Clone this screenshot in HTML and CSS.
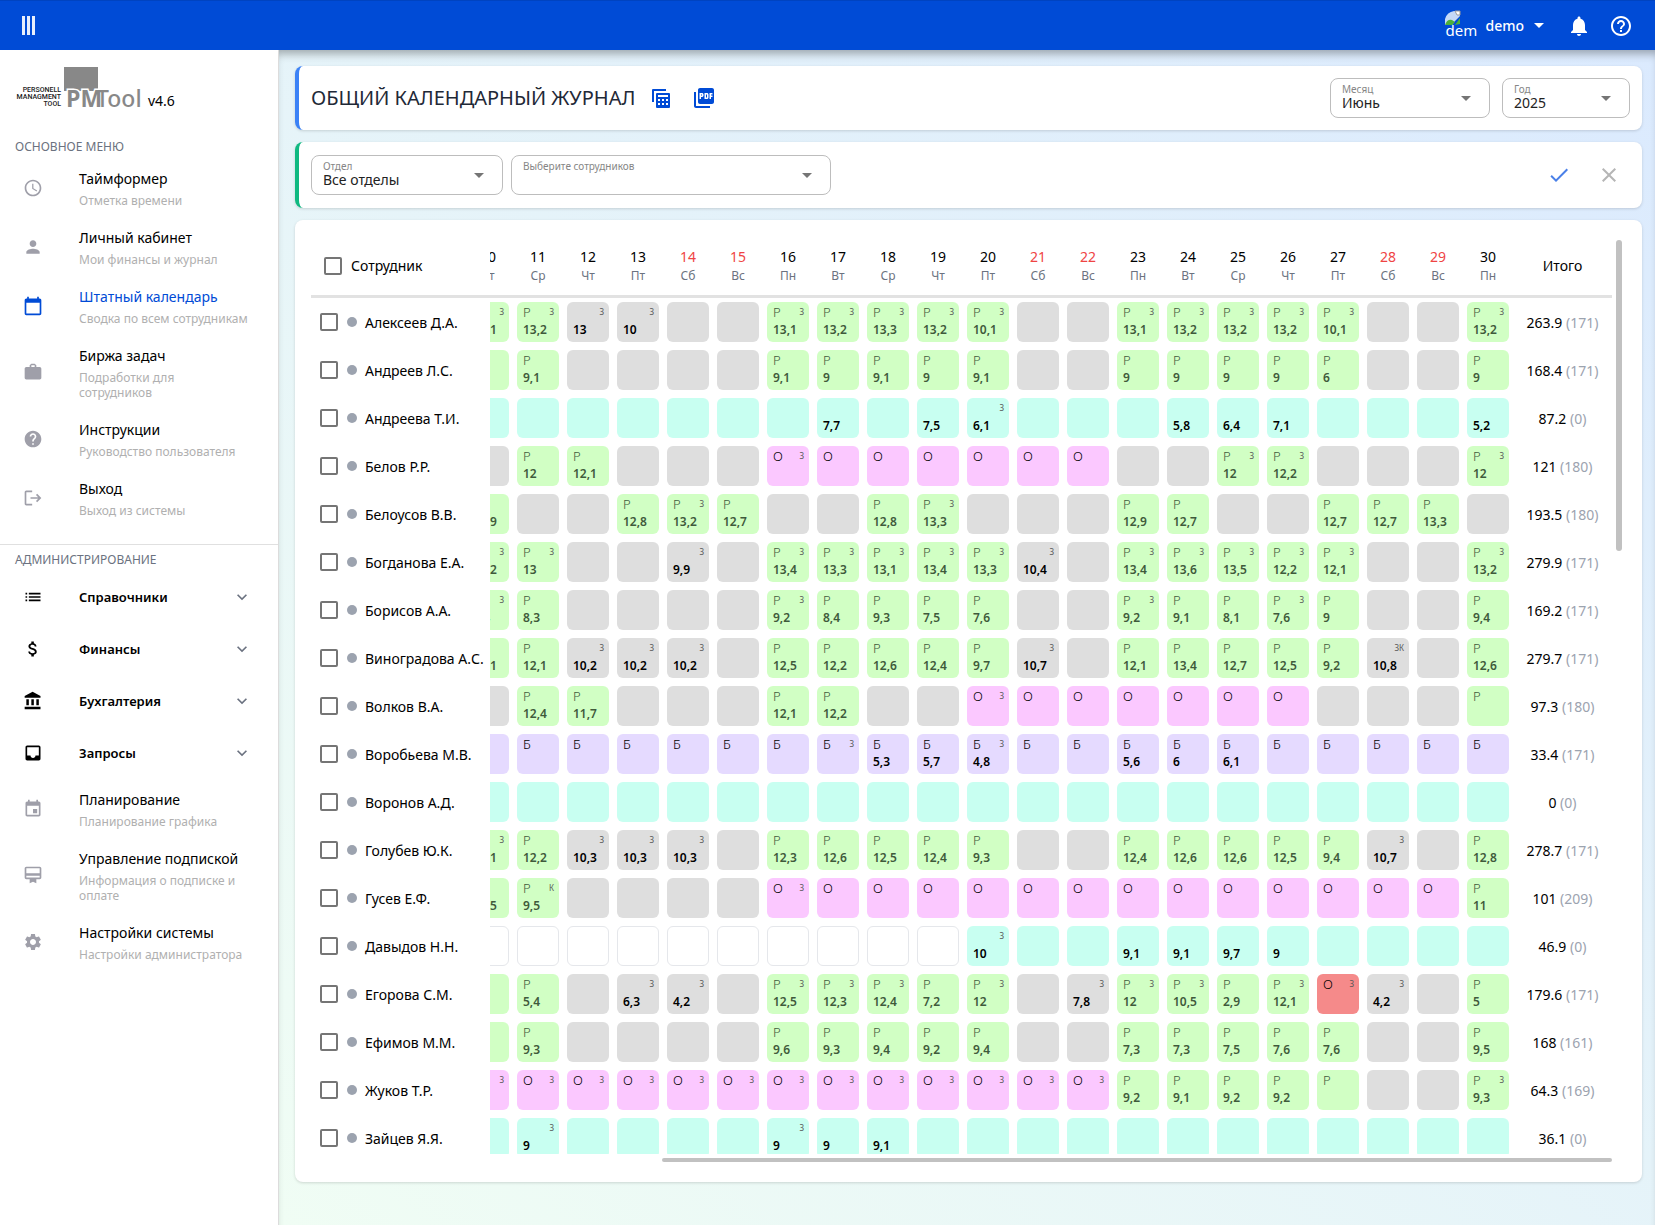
FILE: index.html
```
<!DOCTYPE html>
<html lang="ru">
<head>
  <meta charset="utf-8">
  <title>Общий календарный журнал</title>
  <link rel="stylesheet" href="styles.css">
</head>
<body>
  <header class="topbar">
    <button class="icon-btn menu-btn" aria-label="Меню">
      <span></span><span></span><span></span>
    </button>
    <div class="topbar-right">
      <button class="user">
        <span class="avatar">
          <svg width="16" height="16" viewBox="0 0 16 16">
            <path d="M0 15V9Q2 2 9 1l6 0v5l-5 5-3 4z" fill="#c5d9f7"/>
            <path d="M10 1h5v4h-3z" fill="#fff" stroke="#9a9a9a" stroke-width="1"/>
            <path d="M0 15q2-6 7-5l3 2-3 3z" fill="#4caf3a"/>
            <path d="M15 8v6l-5 1z" fill="#4caf3a"/>
          </svg>
          <span>dem</span>
        </span>
        <span class="user-name">demo</span>
        <span class="caret"></span>
      </button>
      <button class="icon-btn" aria-label="Уведомления">
        <svg width="24" height="24" viewBox="0 0 24 24"><path d="M12 22c1.1 0 2-.9 2-2h-4c0 1.1.9 2 2 2zm6-6v-5c0-3.07-1.63-5.64-4.5-6.32V4c0-.83-.67-1.5-1.5-1.5s-1.5.67-1.5 1.5v.68C7.64 5.36 6 7.92 6 11v5l-2 2v1h16v-1l-2-2z"/></svg>
      </button>
      <button class="icon-btn" aria-label="Помощь">
        <svg width="24" height="24" viewBox="0 0 24 24"><path d="M11 18h2v-2h-2v2zm1-16C6.48 2 2 6.48 2 12s4.48 10 10 10 10-4.48 10-10S17.52 2 12 2zm0 18c-4.41 0-8-3.59-8-8s3.59-8 8-8 8 3.59 8 8-3.59 8-8 8zm0-14c-2.21 0-4 1.79-4 4h2c0-1.1.9-2 2-2s2 .9 2 2c0 2-3 1.75-3 5h2c0-2.25 3-2.5 3-5 0-2.21-1.79-4-4-4z"/></svg>
      </button>
    </div>
  </header>

  <div class="layout">
    <aside class="sidebar">
      <div class="logo">
        <svg width="126" height="42" viewBox="0 0 126 42">
          <g class="logo-small" text-anchor="end">
            <text x="46" y="25">PERSONELL</text>
            <text x="46" y="32">MANAGMENT</text>
            <text x="46" y="39">TOOL</text>
          </g>
          <rect x="49" y="0" width="34" height="24" fill="#888"/>
          <text class="logo-pm" x="51" y="40">PM</text>
          <text class="logo-tool" x="81" y="40">Tool</text>
        </svg>
        <span class="version">v4.6</span>
      </div>

      <h2 class="menu-title">ОСНОВНОЕ МЕНЮ</h2>
      <nav class="menu">
        <a class="menu-item" href="#">
          <svg viewBox="0 0 24 24"><path d="M11.99 2C6.47 2 2 6.48 2 12s4.47 10 9.99 10C17.52 22 22 17.52 22 12S17.52 2 11.99 2zM12 20c-4.42 0-8-3.58-8-8s3.58-8 8-8 8 3.58 8 8-3.58 8-8 8zm.5-13H11v6l5.25 3.15.75-1.23-4.5-2.67z"/></svg>
          <span class="menu-text"><b>Таймформер</b><small>Отметка времени</small></span>
        </a>
        <a class="menu-item" href="#">
          <svg viewBox="0 0 24 24"><path d="M12 12c2.21 0 4-1.79 4-4s-1.79-4-4-4-4 1.79-4 4 1.79 4 4 4zm0 2c-2.67 0-8 1.34-8 4v2h16v-2c0-2.66-5.33-4-8-4z"/></svg>
          <span class="menu-text"><b>Личный кабинет</b><small>Мои финансы и журнал</small></span>
        </a>
        <a class="menu-item active" href="#">
          <svg viewBox="0 0 24 24"><path d="M20 3h-1V1h-2v2H7V1H5v2H4c-1.1 0-2 .9-2 2v16c0 1.1.9 2 2 2h16c1.1 0 2-.9 2-2V5c0-1.1-.9-2-2-2zm0 18H4V8h16v13z"/></svg>
          <span class="menu-text"><b>Штатный календарь</b><small>Сводка по всем сотрудникам</small></span>
        </a>
        <a class="menu-item" href="#">
          <svg viewBox="0 0 24 24"><path d="M20 6h-4V4l-2-2h-4L8 4v2H4c-1.1 0-2 .9-2 2v11c0 1.1.9 2 2 2h16c1.1 0 2-.9 2-2V8c0-1.1-.9-2-2-2zm-6 0h-4V4h4v2z"/></svg>
          <span class="menu-text"><b>Биржа задач</b><small>Подработки для сотрудников</small></span>
        </a>
        <a class="menu-item" href="#">
          <svg viewBox="0 0 24 24"><path d="M12 2C6.48 2 2 6.48 2 12s4.48 10 10 10 10-4.48 10-10S17.52 2 12 2zm1 17h-2v-2h2v2zm2.07-7.75l-.9.92C13.45 12.9 13 13.5 13 15h-2v-.5c0-1.1.45-2.1 1.17-2.83l1.24-1.26c.37-.36.59-.86.59-1.41 0-1.1-.9-2-2-2s-2 .9-2 2H8c0-2.21 1.79-4 4-4s4 1.79 4 4c0 .88-.36 1.68-.93 2.25z"/></svg>
          <span class="menu-text"><b>Инструкции</b><small>Руководство пользователя</small></span>
        </a>
        <a class="menu-item" href="#">
          <svg viewBox="0 0 24 24"><path d="M11 3H4c-1.100 0-2 .9-2 2v14c0 1.100.9 2 2 2h7v-2H4V5h7zM17 7l-1.410 1.410L18.170 11H9v2h9.170l-2.580 2.590L17 17l5-5z"/></svg>
          <span class="menu-text"><b>Выход</b><small>Выход из системы</small></span>
        </a>
      </nav>

      <h2 class="menu-title menu-title-line">АДМИНИСТРИРОВАНИЕ</h2>
      <nav class="menu">
        <button class="menu-group">
          <svg viewBox="0 0 24 24"><path d="M3 13h2v-2H3v2zm0 4h2v-2H3v2zm0-8h2V7H3v2zm4 4h14v-2H7v2zm0 4h14v-2H7v2zM7 7v2h14V7H7z"/></svg>
          <span>Справочники</span>
          <svg class="chevron" viewBox="0 0 24 24"><path d="M7.410 8.590L12 13.170l4.590-4.580L18 10l-6 6-6-6z"/></svg>
        </button>
        <button class="menu-group">
          <svg viewBox="0 0 24 24"><path d="M11.8 10.900c-2.270-.59-3-1.200-3-2.150 0-1.090 1.010-1.850 2.700-1.850 1.780 0 2.440.85 2.500 2.100h2.210c-.07-1.720-1.120-3.300-3.210-3.810V3h-3v2.160c-1.940.42-3.500 1.680-3.500 3.610 0 2.310 1.910 3.460 4.700 4.130 2.500.6 3 1.480 3 2.410 0 .69-.49 1.790-2.700 1.790-2.060 0-2.870-.92-2.980-2.100h-2.200c.12 2.190 1.760 3.420 3.680 3.830V21h3v-2.150c1.950-.37 3.500-1.500 3.500-3.550 0-2.840-2.430-3.810-4.700-4.400z"/></svg>
          <span>Финансы</span>
          <svg class="chevron" viewBox="0 0 24 24"><path d="M7.410 8.590L12 13.170l4.590-4.580L18 10l-6 6-6-6z"/></svg>
        </button>
        <button class="menu-group">
          <svg viewBox="0 0 24 24"><path d="M4 10v7h3v-7H4zm6 0v7h3v-7h-3zM2 22h19v-3H2v3zm14-12v7h3v-7h-3zm-4.500-9L2 6v2h19V6l-9.500-5z"/></svg>
          <span>Бухгалтерия</span>
          <svg class="chevron" viewBox="0 0 24 24"><path d="M7.410 8.590L12 13.170l4.590-4.580L18 10l-6 6-6-6z"/></svg>
        </button>
        <button class="menu-group">
          <svg viewBox="0 0 24 24"><path d="M19 3H4.990c-1.110 0-1.980.89-1.980 2L3 19c0 1.100.88 2 1.990 2H19c1.100 0 2-.9 2-2V5c0-1.110-.9-2-2-2zm0 12h-4c0 1.660-1.350 3-3 3s-3-1.340-3-3H4.990V5H19v10z"/></svg>
          <span>Запросы</span>
          <svg class="chevron" viewBox="0 0 24 24"><path d="M7.410 8.590L12 13.170l4.590-4.580L18 10l-6 6-6-6z"/></svg>
        </button>
        <a class="menu-item" href="#">
          <svg viewBox="0 0 24 24"><path d="M17 12h-5v5h5v-5zM16 1v2H8V1H6v2H5c-1.110 0-1.990.9-1.990 2L3 19c0 1.100.89 2 2 2h14c1.100 0 2-.9 2-2V5c0-1.100-.9-2-2-2h-1V1h-2zm3 18H5V8h14v11z"/></svg>
          <span class="menu-text"><b>Планирование</b><small>Планирование графика</small></span>
        </a>
        <a class="menu-item" href="#">
          <svg viewBox="0 0 24 24"><path d="M20 2H4c-1.110 0-2 .89-2 2v11c0 1.110.89 2 2 2h4v5l4-2 4 2v-5h4c1.110 0 2-.89 2-2V4c0-1.110-.89-2-2-2zm0 13H4v-2h16v2zm0-5H4V4h16v6z"/></svg>
          <span class="menu-text"><b>Управление подпиской</b><small>Информация о подписке и оплате</small></span>
        </a>
        <a class="menu-item" href="#">
          <svg viewBox="0 0 24 24"><path d="M19.140 12.940c.04-.3.06-.61.06-.94 0-.32-.02-.64-.07-.94l2.030-1.580c.18-.14.23-.41.12-.61l-1.920-3.320c-.12-.22-.37-.29-.59-.22l-2.390.96c-.5-.38-1.030-.7-1.620-.94l-.36-2.540c-.04-.24-.24-.41-.48-.41h-3.840c-.24 0-.43.17-.47.41l-.36 2.540c-.59.24-1.130.57-1.620.94l-2.390-.96c-.22-.08-.47 0-.59.22L2.740 8.870c-.12.21-.08.47.12.61l2.030 1.580c-.05.3-.09.63-.09.94s.02.64.07.94l-2.030 1.580c-.18.14-.23.41-.12.61l1.920 3.320c.12.22.37.29.59.22l2.390-.96c.5.38 1.030.7 1.620.94l.36 2.540c.05.24.24.41.48.41h3.840c.24 0 .44-.17.47-.41l.36-2.540c.59-.24 1.130-.56 1.620-.94l2.390.96c.22.08.47 0 .59-.22l1.920-3.320c.12-.22.07-.47-.12-.61l-2.010-1.580zM12 15.600c-1.980 0-3.600-1.620-3.600-3.600s1.620-3.600 3.600-3.600 3.600 1.620 3.600 3.600-1.620 3.600-3.600 3.600z"/></svg>
          <span class="menu-text"><b>Настройки системы</b><small>Настройки администратора</small></span>
        </a>
      </nav>
    </aside>

    <main class="content">
      <section class="card card-title">
        <h1>ОБЩИЙ КАЛЕНДАРНЫЙ ЖУРНАЛ</h1>
        <button class="icon-btn export-btn" aria-label="Экспорт в таблицу">
          <svg width="22" height="22" viewBox="0 0 22 22">
            <path d="M2 15V3q0-1 1-1h13v2H4v11z"/>
            <path fill-rule="evenodd" d="M7 6h12q1 0 1 1v13q0 1-1 1H7q-1 0-1-1V7q0-1 1-1zm1 2v2h10V8zm0 4v2h2v-2zm4 0v2h2v-2zm4 0v2h2v-2zm-8 4v2h2v-2zm4 0v2h2v-2zm4 0v2h2v-2z"/>
          </svg>
        </button>
        <button class="icon-btn export-btn" aria-label="Экспорт в PDF">
          <svg width="24" height="24" viewBox="0 0 24 24"><path d="M20 2H8c-1.100 0-2 .9-2 2v12c0 1.100.9 2 2 2h12c1.100 0 2-.9 2-2V4c0-1.100-.9-2-2-2zm-8.500 7.500c0 .83-.67 1.500-1.500 1.500H9v2H7.500V7H10c.83 0 1.500.67 1.500 1.500v1zm5 2c0 .83-.67 1.500-1.500 1.500h-2.500V7H15c.83 0 1.500.67 1.500 1.500v3zm4-3H19v1h1.500V11H19v2h-1.500V7h3v1.500zM9 9.500h1v-1H9v1zM4 6H2v14c0 1.100.9 2 2 2h14v-2H4V6zm10 5.500h1v-3h-1v3z"/></svg>
        </button>
        <div class="spacer"></div>
        <label class="field field-month">
          <span>Месяц</span>
          <select><option>Июнь</option><option>Июль</option></select>
        </label>
        <label class="field field-year">
          <span>Год</span>
          <select><option>2025</option><option>2024</option></select>
        </label>
      </section>

      <section class="card card-filter">
        <label class="field field-dept">
          <span>Отдел</span>
          <select><option>Все отделы</option></select>
        </label>
        <label class="field field-people">
          <span>Выберите сотрудников</span>
          <select><option></option></select>
        </label>
        <div class="spacer"></div>
        <button class="icon-btn apply-btn" aria-label="Применить">
          <svg width="24" height="24" viewBox="0 0 24 24"><path d="M9 16.170L4.830 12l-1.420 1.410L9 19 21 7l-1.410-1.410z"/></svg>
        </button>
        <button class="icon-btn clear-btn" aria-label="Сбросить">
          <svg width="24" height="24" viewBox="0 0 24 24"><path d="M19 6.410L17.590 5 12 10.590 6.410 5 5 6.410 10.590 12 5 17.590 6.410 19 12 13.410 17.590 19 19 17.590 13.410 12z"/></svg>
        </button>
      </section>

      <section class="card card-table">
        <div class="table-scroll" id="scroll">
          <table class="journal">
            <thead>
              <tr id="head">
                <th class="col-name"><label class="head-name"><input type="checkbox"> Сотрудник</label></th>
              </tr>
            </thead>
            <tbody id="rows"></tbody>
          </table>
        </div>
        <div class="bar-y"><i></i></div>
        <div class="bar-x"><i></i></div>
      </section>
    </main>
  </div>

  <script src="journal.js"></script>
</body>
</html>
```
FILE: styles.css
```
* {
  box-sizing: border-box;
}

body {
  margin: 0;
  height: 100vh;
  display: flex;
  flex-direction: column;
  overflow: hidden;
  font-family: "Noto Sans", "Open Sans", sans-serif;
  font-size: 14px;
  color: #000;
}

button, select {
  font-family: inherit;
  font-size: inherit;
  color: inherit;
  background: none;
  border: none;
  padding: 0;
  cursor: pointer;
}

svg {
  display: block;
  fill: currentColor;
}

.spacer {
  flex: 1;
}

/* top bar */
.topbar {
  flex: none;
  height: 50px;
  display: flex;
  justify-content: space-between;
  align-items: center;
  padding: 0 22px;
  background: #004bd6;
  border-top: 1px solid #0043c0;
  color: #fff;
}

.menu-btn {
  display: flex;
  gap: 2px;
}

.menu-btn span {
  width: 3px;
  height: 19px;
  background: #e8effc;
}

.topbar-right {
  display: flex;
  align-items: center;
  gap: 18px;
}

.user {
  display: flex;
  align-items: center;
  gap: 8px;
  margin-right: 5px;
}

.avatar {
  width: 32px;
  height: 32px;
  text-align: left;
  font-size: 15px;
  line-height: 8px;
}

.avatar span {
  display: block;
}

.user-name {
  font-size: 14px;
  font-weight: 500;
}

.caret {
  margin-left: 2px;
  border: 5px solid transparent;
  border-top-color: #fff;
  border-bottom: none;
}

/* layout */
.layout {
  flex: 1;
  min-height: 0;
  display: flex;
}

.sidebar {
  flex: none;
  width: 279px;
  background: #fff;
  border-right: 1px solid #dcdcdc;
}

.logo {
  display: flex;
  align-items: center;
  gap: 7px;
  padding: 17px 15px 0;
}

.logo svg {
  overflow: visible;
}

.logo-small {
  font: 500 7px Roboto, sans-serif;
  fill: #222;
}

.logo-pm {
  font: 700 23px "Open Sans", sans-serif;
  fill: #888;
  stroke: #fff;
  stroke-width: 3px;
  paint-order: stroke;
}

.logo-tool {
  font: 500 23px "Noto Sans", sans-serif;
  fill: #888;
}

.version {
  padding-top: 26px;
  line-height: 16px;
}

.menu-title {
  margin: 0;
  padding: 28px 15px 0;
  font-size: 12px;
  line-height: 20px;
  font-weight: 400;
  color: #6b7280;
}

.menu-title-line {
  margin-top: 17px;
  padding-top: 5px;
  border-top: 1px solid #e0e0e0;
}

.menu {
  padding-top: 1px;
}

.menu-item {
  display: flex;
  align-items: center;
  gap: 36px;
  padding: 9px 28px 9px 23px;
  color: inherit;
  text-decoration: none;
}

.menu-item svg {
  flex: none;
  width: 20px;
  height: 20px;
  color: #9f9fa9;
}

.menu-text b {
  display: block;
  padding-bottom: 2px;
  line-height: 24px;
  font-weight: 400;
  white-space: nowrap;
}

.menu-text small {
  display: block;
  font-size: 12px;
  line-height: 15px;
  color: #b0b0b0;
}

.menu-item.active svg,
.menu-item.active b {
  color: #004bd6;
}

.menu-group {
  width: 100%;
  height: 52px;
  display: flex;
  align-items: center;
  gap: 36px;
  padding: 0 26px 0 23px;
  font-size: 13px;
  font-weight: 600;
}

.menu-group svg {
  width: 20px;
  height: 20px;
}

.menu-group .chevron {
  margin-left: auto;
  color: #6b7280;
}

/* content */
.content {
  flex: 1;
  min-width: 0;
  display: flex;
  flex-direction: column;
  gap: 12px;
  padding: 16px 13px 43px 16px;
  background: linear-gradient(to top right, #f0fdf4, #dbeafe);
  box-shadow: inset 0 8px 8px -4px rgba(0, 0, 0, 0.3);
}

.card {
  display: flex;
  align-items: center;
  background: #fff;
  border-radius: 8px;
  box-shadow: 0 1px 3px rgba(0, 0, 0, 0.15);
}

.card-title {
  padding: 12px;
  gap: 12px;
  border-left: 4px solid #3b82f6;
}

.card-title h1 {
  margin: 0 3px 0 0;
  font-size: 20px;
  line-height: 28px;
  font-weight: 400;
  color: #1f2937;
}

.export-btn {
  width: 30px;
  color: #004bd6;
}

.card-filter {
  padding: 13px 21px 13px 12px;
  gap: 8px;
  border-left: 4px solid #10b981;
}

.apply-btn {
  margin-right: 18px;
  color: #4a80e8;
}

.clear-btn {
  color: #b5b5b5;
}

.field {
  position: relative;
  height: 40px;
  display: flex;
  flex-direction: column;
  padding: 4px 11px 0;
  border: 1px solid #bdbdbd;
  border-radius: 8px;
}

.field span {
  font-size: 10px;
  line-height: 12px;
  color: #868686;
}

.field select {
  appearance: none;
  height: 16px;
  line-height: 16px;
  color: #222;
}

.field::after {
  content: "";
  position: absolute;
  right: 18px;
  top: 17px;
  border: 5px solid transparent;
  border-top-color: #757575;
  border-bottom: none;
}

.field-month {
  width: 160px;
}

.field-year {
  width: 128px;
}

.field-dept {
  width: 192px;
}

.field-people {
  width: 320px;
}

/* journal */
.card-table {
  flex: 1;
  min-height: 0;
  display: grid;
  grid-template-columns: minmax(0, 1fr) 6px;
  grid-template-rows: minmax(0, 1fr) 4px;
  gap: 4px;
  align-items: stretch;
  padding: 16px 20px 20px 16px;
}

.table-scroll {
  overflow: hidden;
}

.bar-x,
.bar-y {
  display: flex;
}

.bar-y {
  padding-top: 4px;
}

.bar-y i {
  width: 6px;
  height: 34%;
  border-radius: 3px;
  background: #c1c1c1;
}

.bar-x {
  justify-content: flex-end;
}

.bar-x i {
  width: 73%;
  height: 4px;
  border-radius: 2px;
  background: #c1c1c1;
}

.journal {
  width: 100%;
  min-width: 1328px;
  table-layout: fixed;
  border-collapse: separate;
  border-spacing: 0;
}

.journal th {
  position: sticky;
  top: 0;
  z-index: 1;
  width: 50px;
  height: 62px;
  padding: 0 0 3px;
  background: #fff;
  box-shadow: inset 0 -3px 0 #e2e2e2;
  font-weight: 400;
}

.journal .col-name {
  position: sticky;
  left: 0;
  z-index: 1;
  width: 179px;
  padding-left: 9px;
  background: #fff;
  text-align: left;
}

.journal th.col-name {
  z-index: 2;
  padding-left: 13px;
}

.journal .col-total {
  width: 99px;
  text-align: center;
}

.col-total span {
  color: #9ca3af;
}

.head-name,
.row-name {
  display: flex;
  align-items: center;
  gap: 9px;
  white-space: nowrap;
}

.row-name {
  gap: 8px;
}

.row-name i {
  width: 10px;
  height: 10px;
  margin-left: 1px;
  border-radius: 50%;
  background: #9ca3af;
}

.journal input {
  appearance: none;
  width: 18px;
  height: 18px;
  margin: 0;
  border: 2px solid #757575;
  border-radius: 2px;
}

.day-num {
  display: block;
  line-height: 20px;
}

.day-name {
  display: block;
  font-size: 12px;
  line-height: 18px;
  color: #6b7280;
}

.weekend .day-num {
  color: #ef4444;
}

.journal td {
  height: 48px;
  padding: 4px;
}

.day {
  height: 40px;
  display: grid;
  grid-template-columns: 1fr auto;
  grid-template-rows: 20px 16px;
  padding: 0 5px 0 6px;
  border-radius: 6px;
  line-height: 20px;
}

.day .code {
  font-size: 13px;
  font-weight: 300;
}

.day .mark {
  font-size: 8px;
  color: #555;
}

.day .hours {
  grid-column: 1 / 3;
  font-size: 12px;
  line-height: 16px;
  font-weight: 600;
}

.day-work {
  background: #d1ffc4;
  color: #3f5a3b;
}

.day-off {
  background: #dedede;
}

.day-free {
  background: #c8fff1;
}

.day-vacation {
  background: #fbc8ff;
}

.day-sick {
  background: #e5daff;
}

.day-conflict {
  background: #f58a8a;
}

.day-none {
  background: #fff;
  border: 1px solid #e5e7eb;
}
```
FILE: journal.js
```
// R - работа, - - выходной, C - свободный график, O - отпуск, B - больничный,
// X - конфликт, N - нет данных; * - метка "З", ^ - метка "К"
const types = {
  'R': ['day-work', 'Р'],
  '-': ['day-off', ''],
  'C': ['day-free', ''],
  'O': ['day-vacation', 'О'],
  'B': ['day-sick', 'Б'],
  'X': ['day-conflict', 'О'],
  'N': ['day-none', '']
};

const weekdays = ['Пн', 'Вт', 'Ср', 'Чт', 'Пт', 'Сб', 'Вс'];
const firstDay = 10;
const lastDay = 30;

const employees = [
  ['Алексеев Д.А.', '263.9', 171, 'R13,1* R13,2* -13* -10* - - R13,1* R13,2* R13,3* R13,2* R10,1* - - R13,1* R13,2* R13,2* R13,2* R10,1* - - R13,2*'],
  ['Андреев Л.С.', '168.4', 171, 'R9 R9,1 - - - - R9,1 R9 R9,1 R9 R9,1 - - R9 R9 R9 R9 R6 - - R9'],
  ['Андреева Т.И.', '87.2', 0, 'C C C C C C C C7,7 C C7,5 C6,1* C C C C5,8 C6,4 C7,1 C C C C5,2'],
  ['Белов Р.Р.', '121', 180, '- R12 R12,1 - - - O* O O O O O O - - R12* R12,2* - - - R12*'],
  ['Белоусов В.В.', '193.5', 180, 'R12,9 - - R12,8 R13,2* R12,7 - - R12,8 R13,3* - - - R12,9 R12,7 - - R12,7 R12,7 R13,3 -'],
  ['Богданова Е.А.', '279.9', 171, 'R13,2* R13* - - -9,9* - R13,4* R13,3* R13,1* R13,4* R13,3* -10,4* - R13,4* R13,6* R13,5* R12,2* R12,1* - - R13,2*'],
  ['Борисов А.А.', '169.2', 171, 'R9,4* R8,3 - - - - R9,2* R8,4 R9,3 R7,5 R7,6 - - R9,2* R9,1 R8,1 R7,6* R9 - - R9,4'],
  ['Виноградова А.С.', '279.7', 171, 'R12,1 R12,1 -10,2* -10,2* -10,2* - R12,5 R12,2 R12,6 R12,4 R9,7 -10,7* - R12,1 R13,4 R12,7 R12,5 R9,2 -10,8*^ - R12,6'],
  ['Волков В.А.', '97.3', 180, '- R12,4 R11,7 - - - R12,1 R12,2 - - O* O O O O O O - - - R'],
  ['Воробьева М.В.', '33.4', 171, 'B B B B B B B B* B5,3 B5,7 B4,8* B B B5,6 B6 B6,1 B B B B B'],
  ['Воронов А.Д.', '0', 0, 'C C C C C C C C C C C C C C C C C C C C C'],
  ['Голубев Ю.К.', '278.7', 171, 'R12,1* R12,2 -10,3* -10,3* -10,3* - R12,3 R12,6 R12,5 R12,4 R9,3 - - R12,4 R12,6 R12,6 R12,5 R9,4 -10,7* - R12,8'],
  ['Гусев Е.Ф.', '101', 209, 'R12,5 R9,5^ - - - - O* O O O O O O O O O O O O O R11'],
  ['Давыдов Н.Н.', '46.9', 0, 'N N N N N N N N N N C10* C C C9,1 C9,1 C9,7 C9 C C C C'],
  ['Егорова С.М.', '179.6', 171, 'R9 R5,4 - -6,3* -4,2* - R12,5* R12,3* R12,4* R7,2 R12* - -7,8* R12* R10,5* R2,9 R12,1* X* -4,2* - R5'],
  ['Ефимов М.М.', '168', 161, 'R9 R9,3 - - - - R9,6 R9,3 R9,4 R9,2 R9,4 - - R7,3 R7,3 R7,5 R7,6 R7,6 - - R9,5'],
  ['Жуков Т.Р.', '64.3', 169, 'O* O* O* O* O* O* O* O* O* O* O* O* O* R9,2 R9,1 R9,2 R9,2 R - - R9,3*'],
  ['Зайцев Я.Я.', '36.1', 0, 'C C9* C C C C C9* C9 C9,1 C C C C C C C C C C C C']
];

function dayCell(token) {
  const [cls, code] = types[token[0]];
  const hours = token.slice(1).replace(/[*^]/g, '');
  const mark = (token.includes('*') ? 'З' : '') + (token.includes('^') ? 'К' : '');
  return `<td><div class="day ${cls}"><span class="code">${code}</span><span class="mark">${mark}</span><span class="hours">${hours}</span></div></td>`;
}

let head = '';
for (let day = firstDay; day <= lastDay; day++) {
  const w = (day + 5) % 7; // 2 июня 2025 - понедельник
  head += `<th class="${w > 4 ? 'weekend' : ''}"><span class="day-num">${day}</span><span class="day-name">${weekdays[w]}</span></th>`;
}
document.getElementById('head').innerHTML += head + '<th class="col-total">Итого</th>';

document.getElementById('rows').innerHTML = employees.map(([name, total, norm, days]) => `
  <tr>
    <td class="col-name"><label class="row-name"><input type="checkbox"><i></i>${name}</label></td>
    ${days.split(' ').map(dayCell).join('')}
    <td class="col-total">${total} <span>(${norm})</span></td>
  </tr>`).join('');

// показываем конец месяца
const scroll = document.getElementById('scroll');
scroll.scrollLeft = scroll.scrollWidth;
```
